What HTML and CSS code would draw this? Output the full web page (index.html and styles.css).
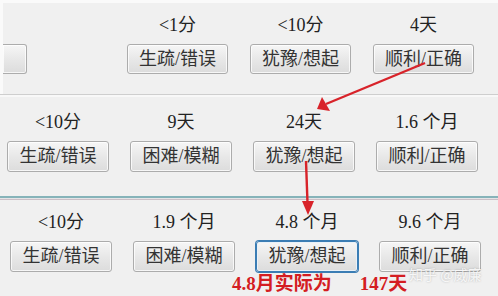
FILE: index.html
```html
<!DOCTYPE html>
<html lang="zh-CN">
  <head>
    <meta charset="UTF-8" />
    <meta name="viewport" content="width=device-width, initial-scale=1.0" />
    <title>复习间隔</title>
    <link rel="stylesheet" href="styles.css">
  </head>
  <body>
    <div class="shot">
      <div class="panel panel-first">
        <div class="col col-stub">
          <div class="label"></div>
          <div class="btn btn-stub"></div>
        </div>
        <div class="col">
          <div class="label">&lt;1分</div>
          <div class="btn">生疏/错误</div>
        </div>
        <div class="col">
          <div class="label">&lt;10分</div>
          <div class="btn">犹豫/想起</div>
        </div>
        <div class="col">
          <div class="label">4天</div>
          <div class="btn">顺利/正确</div>
        </div>
      </div>
      <div class="rule-grey"></div>

      <div class="panel panel-second">
        <div class="col">
          <div class="label">&lt;10分</div>
          <div class="btn">生疏/错误</div>
        </div>
        <div class="col">
          <div class="label">9天</div>
          <div class="btn">困难/模糊</div>
        </div>
        <div class="col">
          <div class="label">24天</div>
          <div class="btn">犹豫/想起</div>
        </div>
        <div class="col">
          <div class="label">1.6 个月</div>
          <div class="btn">顺利/正确</div>
        </div>
      </div>
      <div class="rule-teal"></div>

      <div class="panel panel-third">
        <div class="col">
          <div class="label">&lt;10分</div>
          <div class="btn">生疏/错误</div>
        </div>
        <div class="col">
          <div class="label">1.9 个月</div>
          <div class="btn">困难/模糊</div>
        </div>
        <div class="col">
          <div class="label">4.8 个月</div>
          <div class="btn btn-focus">犹豫/想起</div>
        </div>
        <div class="col">
          <div class="label">9.6 个月</div>
          <div class="btn">顺利/正确</div>
        </div>
      </div>

      <!-- annotations drawn over the screenshot -->
      <svg class="arrows" width="498" height="296" viewBox="0 0 498 296">
        <line x1="425" y1="63" x2="326" y2="104" stroke="#d8232a" stroke-width="2.4" />
        <polygon points="317,109 322,97 330,111" fill="#d8232a" />
        <line x1="306" y1="161" x2="307.5" y2="203" stroke="#d8232a" stroke-width="2.4" />
        <polygon points="308,215 302,201 314,201" fill="#d8232a" />
      </svg>
      <div class="note">
        <span>4.8月实际为</span><span class="note-days">147天</span>
      </div>
      <div class="mark">知乎 @威廉</div>
    </div>
  </body>
</html>
```

FILE: styles.css
```css
* {
  box-sizing: border-box;
}

body {
  margin: 0;
  background: #f0f0f0;
  font-family: "Liberation Serif", "Noto Sans CJK SC", serif;
  color: #222;
  overflow: hidden;
}

.shot {
  position: relative;
  width: 498px;
  height: 296px;
  overflow: hidden;
}

.panel {
  display: flex;
  background: #f0f0f0;
}

.panel-first {
  height: 94px;
  border-top: 3px solid #fafafa;
  border-left: 3px solid #fafafa;
  padding-top: 12px;
  gap: 22px;
}

.panel-second {
  height: 99px;
  padding: 15px 0 0 7px;
  gap: 21px;
}

.panel-third {
  height: 96px;
  padding: 12px 0 0 10px;
  gap: 21px;
}

.rule-grey {
  height: 3px;
  border-top: 1px solid #cecece;
  background: #f8f8f8;
}

.rule-teal {
  height: 4px;
  border-top: 2px solid #86b3b9;
  border-bottom: 1px solid #cbbfc6;
  background: #e4e4e6;
}

.col {
  display: flex;
  flex-direction: column;
  align-items: center;
  gap: 9px;
  width: 102px;
}

.panel-first .col {
  width: 101px;
}

.panel-first .col-stub {
  width: 24px;
  margin-right: 78px;
}

.label {
  height: 20px;
  font-size: 18px;
  line-height: 20px;
  white-space: nowrap;
}

.btn {
  width: 100%;
  height: 31px;
  border: 1px solid #acacac;
  border-radius: 3px;
  background: linear-gradient(#f6f6f6, #e8e8e8 50%, #dcdcdc);
  box-shadow: inset 0 0 0 1px rgba(255, 255, 255, 0.75);
  font-size: 18px;
  line-height: 29px;
  text-align: center;
  color: #333;
  white-space: nowrap;
}

.panel-first .btn {
  height: 30px;
  line-height: 28px;
}

.btn-stub {
  border-left: none;
  border-radius: 0 3px 3px 0;
}

.btn-focus {
  border: 1px solid #3b7db4;
  box-shadow: 0 0 0 1px #3b7db4, inset 0 0 0 1px #e9f1f8;
}

.arrows {
  position: absolute;
  left: 0;
  top: 0;
}

.note {
  position: absolute;
  left: 232px;
  top: 274px;
  font-size: 19px;
  line-height: 20px;
  font-weight: 700;
  color: #d41d22;
  white-space: nowrap;
}

.note-days {
  margin-left: 28px;
}

.mark {
  position: absolute;
  left: 409px;
  top: 265px;
  font-family: "Noto Sans CJK SC", sans-serif;
  font-size: 14px;
  line-height: 18px;
  color: rgba(255, 255, 255, 0.85);
  text-shadow: 0 0 2px rgba(0, 0, 0, 0.25);
  white-space: nowrap;
}
```
